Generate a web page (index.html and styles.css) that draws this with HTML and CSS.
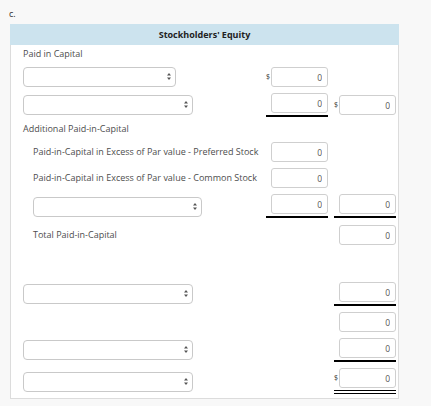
FILE: index.html
```html
<!DOCTYPE html>
<html lang="en">
<head>
<meta charset="utf-8">
<title>Stockholders' Equity</title>
<link rel="stylesheet" href="styles.css">
</head>
<body>
<div class="part">c.</div>
<div class="panel">
  <div class="panel-head">Stockholders' Equity</div>
  <div class="panel-body">
    <div class="section first">Paid in Capital</div>

    <div class="row mt-7">
      <div class="pick w-153"><select><option></option></select><svg class="arrows" viewBox="0 0 4 7"><path d="M2 0 L4 2.6 H0 Z M2 7 L4 4.4 H0 Z"/></svg></div>
      <div class="cell"><span class="cur">$</span><input class="amt" value="0"></div>
      <div class="cell"></div>
    </div>

    <div class="row">
      <div class="pick w-170 low-2"><select><option></option></select><svg class="arrows" viewBox="0 0 4 7"><path d="M2 0 L4 2.6 H0 Z M2 7 L4 4.4 H0 Z"/></svg></div>
      <div class="cell sum"><input class="amt" value="0"></div>
      <div class="cell low-2"><span class="cur">$</span><input class="amt" value="0"></div>
    </div>

    <div class="section">Additional Paid-in-Capital</div>

    <div class="row mt-7">
      <div class="label indent">Paid-in-Capital in Excess of Par value - Preferred Stock</div>
      <div class="cell"><input class="amt" value="0"></div>
      <div class="cell"></div>
    </div>

    <div class="row">
      <div class="label indent">Paid-in-Capital in Excess of Par value - Common Stock</div>
      <div class="cell"><input class="amt" value="0"></div>
      <div class="cell"></div>
    </div>

    <div class="row">
      <div class="pick w-169 indent low-3"><select><option></option></select><svg class="arrows" viewBox="0 0 4 7"><path d="M2 0 L4 2.6 H0 Z M2 7 L4 4.4 H0 Z"/></svg></div>
      <div class="cell sum"><input class="amt" value="0"></div>
      <div class="cell sum"><input class="amt" value="0"></div>
    </div>

    <div class="row mt-7">
      <div class="label indent">Total Paid-in-Capital</div>
      <div class="cell"></div>
      <div class="cell"><input class="amt" value="0"></div>
    </div>

    <div class="row mt-37">
      <div class="pick w-170 low-2"><select><option></option></select><svg class="arrows" viewBox="0 0 4 7"><path d="M2 0 L4 2.6 H0 Z M2 7 L4 4.4 H0 Z"/></svg></div>
      <div class="cell"></div>
      <div class="cell sum"><input class="amt" value="0"></div>
    </div>

    <div class="row">
      <div></div>
      <div class="cell"></div>
      <div class="cell"><input class="amt" value="0"></div>
    </div>

    <div class="row">
      <div class="pick w-170 low-2"><select><option></option></select><svg class="arrows" viewBox="0 0 4 7"><path d="M2 0 L4 2.6 H0 Z M2 7 L4 4.4 H0 Z"/></svg></div>
      <div class="cell"></div>
      <div class="cell sum"><input class="amt" value="0"></div>
    </div>

    <div class="row">
      <div class="pick w-170 low-4"><select><option></option></select><svg class="arrows" viewBox="0 0 4 7"><path d="M2 0 L4 2.6 H0 Z M2 7 L4 4.4 H0 Z"/></svg></div>
      <div class="cell"></div>
      <div class="cell total"><span class="cur">$</span><input class="amt" value="0"></div>
    </div>
  </div>
</div>
</body>
</html>
```

FILE: styles.css
```css
* {
  box-sizing: border-box;
}

body {
  margin: 0;
  padding: 8px 0 0 9px;
  background: #f8f8f8;
  font-family: "Open Sans", "Liberation Sans", sans-serif;
  font-size: 9px;
  color: #4d4d4d;
}

.part {
  line-height: 11px;
  height: 11px;
  color: #333;
}

.panel {
  margin: 5px 0 0 1px;
  width: 389px;
  background: #fff;
  border: 1px solid #dcdcdc;
  border-top: 0;
}

.panel-head {
  margin: 0 -1px;
  height: 21px;
  line-height: 21px;
  background: #cce3ee;
  text-align: center;
  font-weight: 700;
  color: #222;
}

.panel-body {
  padding: 0 2px 4px 12px;
}

.section {
  margin-top: 6px;
  line-height: 12px;
  height: 12px;
}

.section.first {
  margin-top: 3px;
}

.row {
  display: grid;
  grid-template-columns: 1fr 62px 62px;
  column-gap: 6px;
  align-items: start;
  margin-top: 6px;
}

.mt-7 { margin-top: 7px; }
.mt-37 { margin-top: 37px; }

.low-2 { margin-top: 2px; }
.low-3 { margin-top: 3px; }
.low-4 { margin-top: 4px; }

.label {
  align-self: center;
  line-height: 12px;
}

.indent {
  margin-left: 10px;
}

/* select boxes with a small up/down caret */
.pick {
  position: relative;
  height: 20px;
}

.w-153 { width: 153px; }
.w-169 { width: 169px; }
.w-170 { width: 170px; }

.pick select {
  appearance: none;
  -webkit-appearance: none;
  display: block;
  width: 100%;
  height: 100%;
  margin: 0;
  padding: 0 14px 0 6px;
  background: #fff;
  border: 1px solid #c9c9c9;
  border-radius: 4px;
  font: inherit;
  color: #333;
}

.pick .arrows {
  position: absolute;
  right: 5px;
  top: 6px;
  width: 4px;
  height: 7px;
  fill: #555;
}

/* amount columns */
.cell {
  display: flex;
  align-items: center;
  justify-content: flex-end;
  position: relative;
  min-height: 20px;
}

.cell.sum {
  padding-bottom: 2px;
  border-bottom: 2px solid #000;
}

.cell.total {
  padding-bottom: 2px;
  border-bottom: 4px double #000;
}

.cur {
  margin-right: auto;
  font-size: 7px;
  line-height: 8px;
  color: #333;
}

.amt {
  display: block;
  width: 57px;
  height: 20px;
  margin: 0;
  padding: 0 5px 0 2px;
  border: 1px solid #cfcfcf;
  border-radius: 3px;
  background: #fff;
  text-align: right;
  font-family: "Open Sans", "Liberation Sans", sans-serif;
  font-size: 8.5px;
  color: #555;
}
```
